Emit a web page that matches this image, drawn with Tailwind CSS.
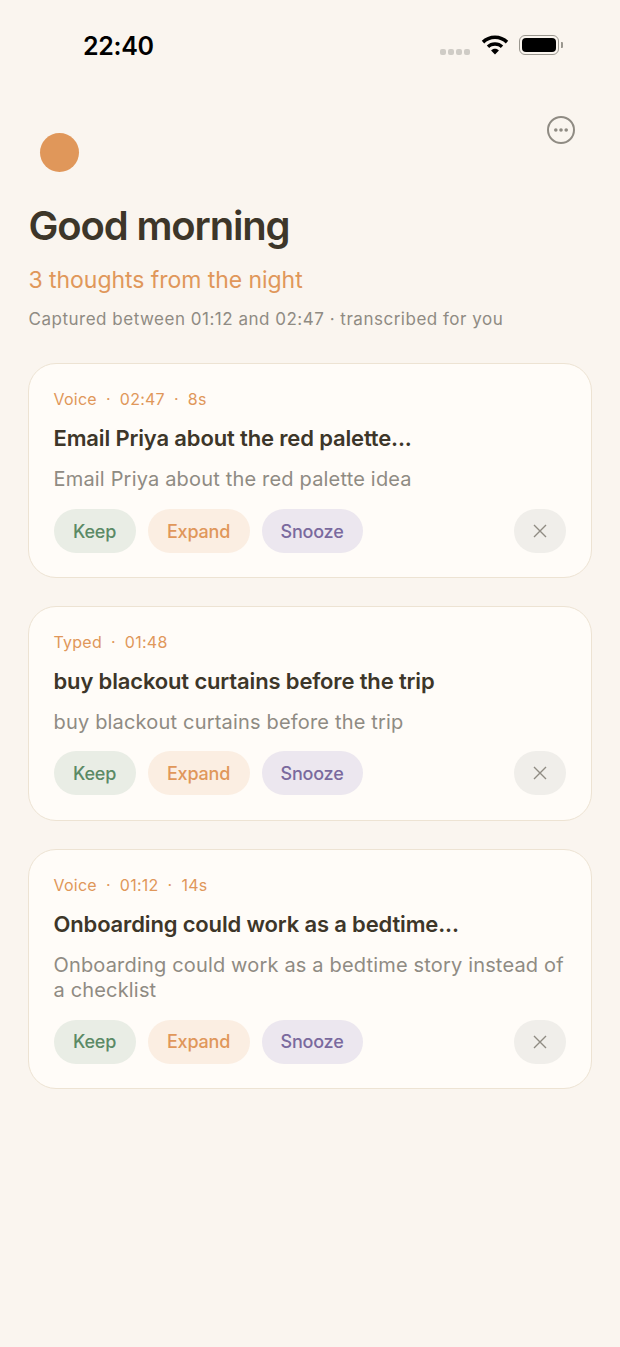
<!DOCTYPE html>
<html lang="en">
<head>
  <meta charset="UTF-8">
  <title>Good morning</title>
  <script src="https://cdn.jsdelivr.net/npm/@tailwindcss/browser@4"></script>
</head>
<body class="bg-[#faf5ef] font-['Inter',sans-serif] w-[620px] h-[1347px] overflow-hidden">

  <!-- Status bar -->
  <div class="h-[90px] relative">
    <div class="absolute left-[83px] top-[31px] text-[25px] leading-[30px] font-semibold tracking-[-0.3px] text-black">22:40</div>
    <div class="absolute left-[440px] top-[49px] flex gap-[2px]">
      <div class="w-[6px] h-[6px] rounded-[2px] bg-[#cfccc6]"></div>
      <div class="w-[6px] h-[6px] rounded-[2px] bg-[#cfccc6]"></div>
      <div class="w-[6px] h-[6px] rounded-[2px] bg-[#cfccc6]"></div>
      <div class="w-[6px] h-[6px] rounded-[2px] bg-[#cfccc6]"></div>
    </div>
    <svg class="absolute left-[481px] top-[35px]" width="28" height="20" viewBox="0 0 28 20">
      <path d="M14 0.5C8.8 0.5 4.2 2.5 0.8 5.8L3.2 8.4C6 5.7 9.8 4 14 4s8 1.7 10.8 4.4l2.4-2.6C23.8 2.5 19.2 0.5 14 0.5z" fill="#000"/>
      <path d="M14 7.3c-3.2 0-6.1 1.2-8.2 3.3l2.4 2.5c1.5-1.5 3.5-2.3 5.8-2.3s4.3.8 5.8 2.3l2.4-2.5c-2.1-2.1-5-3.3-8.2-3.3z" fill="#000"/>
      <path d="M14 13.8c-1.5 0-2.9.6-3.9 1.6L14 19.4l3.9-4c-1-1-2.4-1.6-3.9-1.6z" fill="#000"/>
    </svg>
    <div class="absolute left-[519px] top-[35px] w-[40px] h-[20px] rounded-[6px] border-[1.5px] border-[#9a978f] p-[2px]">
      <div class="w-full h-full rounded-[4px] bg-black"></div>
    </div>
    <div class="absolute left-[561px] top-[42px] w-[2px] h-[6px] rounded-r-[1px] bg-[#9a978f]"></div>
  </div>

  <main class="px-[28px] relative">
    <svg class="absolute left-[546px] top-[25px]" width="30" height="30" viewBox="0 0 30 30" fill="none">
      <circle cx="15" cy="15" r="13" stroke="#8f8b83" stroke-width="2"/>
      <circle cx="9.8" cy="15" r="1.8" fill="#8f8b83"/>
      <circle cx="15" cy="15" r="1.8" fill="#8f8b83"/>
      <circle cx="20.2" cy="15" r="1.8" fill="#8f8b83"/>
    </svg>

    <div class="pt-[43px] pl-[12px]">
      <div class="w-[39px] h-[39px] rounded-full bg-[#e0975a]"></div>
    </div>
    <h1 class="mt-[29px] pl-[0.5px] text-[40px] leading-[50px] font-semibold tracking-[-1.15px] text-[#3d3629]">Good morning</h1>
    <p class="mt-[13px] pl-[0.5px] text-[23px] leading-[32px] tracking-[-0.05px] text-[#e0975a]">3 thoughts from the night</p>
    <p class="mt-[11px] pl-[0.5px] text-[17px] leading-[24px] tracking-[0.51px] text-[#8f8b83]">Captured between 01:12 and 02:47 · transcribed for you</p>

    <div class="mt-[32px] flex flex-col gap-[28px]">

      <div class="w-[564px] rounded-[28px] border-[1.5px] border-[#ede3d3] bg-[#fffcf8] pl-[24.5px] pr-[25px] pt-[23px] pb-[24px]">
        <div class="text-[16px] leading-[24px] tracking-[0.25px] text-[#e0975a] flex gap-[9px]"><span>Voice</span><span>·</span><span>02:47</span><span>·</span><span>8s</span></div>
        <div class="mt-[12px] text-[22px] leading-[30px] font-semibold tracking-[-0.15px] text-[#3d3629]">Email Priya about the red palette...</div>
        <div class="mt-[14px] text-[20px] leading-[25.5px] tracking-[0.18px] text-[#8f8b83]">Email Priya about the red palette idea</div>
        <div class="mt-[16.5px] flex items-center gap-[12px]">
          <button class="w-[82px] h-[44px] rounded-full bg-[#e9ede5] text-[#5b8a66] text-[18px] tracking-[-0.2px] font-medium">Keep</button>
          <button class="w-[102px] h-[44px] rounded-full bg-[#fbeee2] text-[#e0975a] text-[18px] tracking-[-0.2px] font-medium">Expand</button>
          <button class="w-[101px] h-[44px] rounded-full bg-[#ece7ef] text-[#7a6a9e] text-[18px] tracking-[-0.2px] font-medium">Snooze</button>
          <button class="ml-auto w-[52px] h-[44px] rounded-full bg-[#f0eeea] flex items-center justify-center">
            <svg width="14" height="14" viewBox="0 0 14 14" fill="none"><path d="M1 1l12 12M13 1L1 13" stroke="#8f8b83" stroke-width="1.4"/></svg>
          </button>
        </div>
      </div>

      <div class="w-[564px] rounded-[28px] border-[1.5px] border-[#ede3d3] bg-[#fffcf8] pl-[24.5px] pr-[25px] pt-[23px] pb-[24.8px]">
        <div class="text-[16px] leading-[24px] tracking-[0.25px] text-[#e0975a] flex gap-[9px]"><span>Typed</span><span>·</span><span>01:48</span></div>
        <div class="mt-[12px] text-[22px] leading-[30px] font-semibold tracking-[-0.15px] text-[#3d3629]">buy blackout curtains before the trip</div>
        <div class="mt-[14px] text-[20px] leading-[25.5px] tracking-[0.18px] text-[#8f8b83]">buy blackout curtains before the trip</div>
        <div class="mt-[15.7px] flex items-center gap-[12px]">
          <button class="w-[82px] h-[44px] rounded-full bg-[#e9ede5] text-[#5b8a66] text-[18px] tracking-[-0.2px] font-medium">Keep</button>
          <button class="w-[102px] h-[44px] rounded-full bg-[#fbeee2] text-[#e0975a] text-[18px] tracking-[-0.2px] font-medium">Expand</button>
          <button class="w-[101px] h-[44px] rounded-full bg-[#ece7ef] text-[#7a6a9e] text-[18px] tracking-[-0.2px] font-medium">Snooze</button>
          <button class="ml-auto w-[52px] h-[44px] rounded-full bg-[#f0eeea] flex items-center justify-center">
            <svg width="14" height="14" viewBox="0 0 14 14" fill="none"><path d="M1 1l12 12M13 1L1 13" stroke="#8f8b83" stroke-width="1.4"/></svg>
          </button>
        </div>
      </div>

      <div class="w-[564px] rounded-[28px] border-[1.5px] border-[#ede3d3] bg-[#fffcf8] pl-[24.5px] pr-[25px] pt-[23px] pb-[24.8px]">
        <div class="text-[16px] leading-[24px] tracking-[0.25px] text-[#e0975a] flex gap-[9px]"><span>Voice</span><span>·</span><span>01:12</span><span>·</span><span>14s</span></div>
        <div class="mt-[12px] text-[22px] leading-[30px] font-semibold tracking-[-0.15px] text-[#3d3629]">Onboarding could work as a bedtime...</div>
        <div class="mt-[14px] text-[20px] leading-[25.5px] tracking-[0.17px] text-[#8f8b83]">Onboarding could work as a bedtime story instead of a checklist</div>
        <div class="mt-[15.7px] flex items-center gap-[12px]">
          <button class="w-[82px] h-[44px] rounded-full bg-[#e9ede5] text-[#5b8a66] text-[18px] tracking-[-0.2px] font-medium">Keep</button>
          <button class="w-[102px] h-[44px] rounded-full bg-[#fbeee2] text-[#e0975a] text-[18px] tracking-[-0.2px] font-medium">Expand</button>
          <button class="w-[101px] h-[44px] rounded-full bg-[#ece7ef] text-[#7a6a9e] text-[18px] tracking-[-0.2px] font-medium">Snooze</button>
          <button class="ml-auto w-[52px] h-[44px] rounded-full bg-[#f0eeea] flex items-center justify-center">
            <svg width="14" height="14" viewBox="0 0 14 14" fill="none"><path d="M1 1l12 12M13 1L1 13" stroke="#8f8b83" stroke-width="1.4"/></svg>
          </button>
        </div>
      </div>

    </div>
  </main>
</body>
</html>
